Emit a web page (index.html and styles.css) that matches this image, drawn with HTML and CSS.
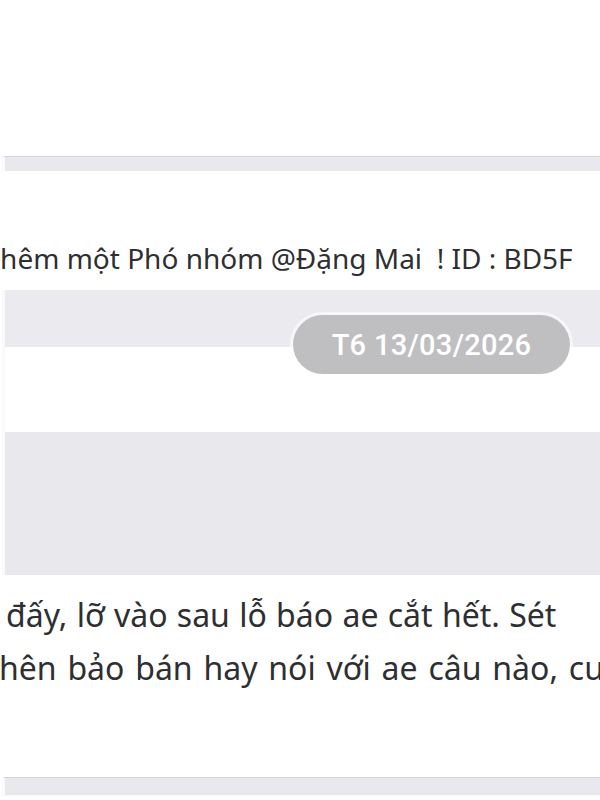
FILE: index.html
```
<html>
	<head>
		<title>Nhóm chat</title>
		<meta name="viewport" content="width=device-width, initial-scale=1">
		<link rel="stylesheet" href="styles.css">
	</head>
	<body>

		<div class="topSpace"></div>

		<div class="divider"></div>

		<div class="notice">
			<div class="noticeText">thêm một Phó nhóm @Đặng Mai &nbsp;! ID : BD5F</div>
		</div>

		<div class="dateRow">
			<div class="datePill">T6 13/03/2026</div>
		</div>

		<div class="grayBlock"></div>

		<div class="message">
			<div class="line first">đấy, lỡ vào sau lỗ báo ae cắt hết. Sét</div>
			<div class="line second">hên bảo bán hay nói với ae câu nào, cung</div>
		</div>

		<div class="divider bottom"></div>

	</body>
</html>
```

FILE: styles.css
```
body
{
	margin: 0;
	width: 600px;
	height: 800px;
	overflow: hidden;
	background-color: white;
	font-family: "Noto Sans", "Open Sans", sans-serif;
	color: #2e2f32;
}

.topSpace
{
	height: 156px;
}

.divider
{
	height: 14px;
	border-top: 1px solid #d3d3d9;
	border-left: 3px solid #fafafc;
	margin-left: 2px;
	background-color: #e8e8ed;
}

.divider.bottom
{
	height: 17px;
	border-bottom: 2px solid #fafafc;
}

.notice
{
	height: 119px;
	display: flex;
	align-items: flex-end;
	overflow: hidden;
}

.noticeText
{
	white-space: nowrap;
	font-size: 28px;
	line-height: 34px;
	margin-left: -10px;
	margin-bottom: 15px;
}

.dateRow
{
	height: 142px;
	display: flex;
	justify-content: flex-end;
	align-items: flex-start;
	padding-top: 25px;
	box-sizing: border-box;
	padding-right: 30px;
	background: linear-gradient(#ebebef 57px, white 57px);
	border-left: 3px solid #fafafc;
	margin-left: 2px;
}

.datePill
{
	width: 277px;
	height: 59px;
	border-radius: 30px;
	background-color: #bfbfc1;
	box-shadow: 0 0 0 3px rgba(255, 255, 255, 0.6);
	color: white;
	font-family: Roboto, "Noto Sans", sans-serif;
	font-weight: 500;
	font-size: 29px;
	letter-spacing: 0.3px;
	display: flex;
	align-items: center;
	justify-content: center;
}

.grayBlock
{
	height: 143px;
	background-color: #e9e9ed;
	border-left: 3px solid #fafafc;
	margin-left: 2px;
}

.message
{
	height: 202px;
	padding-top: 13px;
	box-sizing: border-box;
	overflow: hidden;
}

.line
{
	white-space: nowrap;
	font-size: 32px;
	line-height: 53px;
	word-spacing: 1px;
}

.first
{
	margin-left: 6px;
}

.second
{
	margin-left: -1px;
	word-spacing: 2.5px;
}
```
